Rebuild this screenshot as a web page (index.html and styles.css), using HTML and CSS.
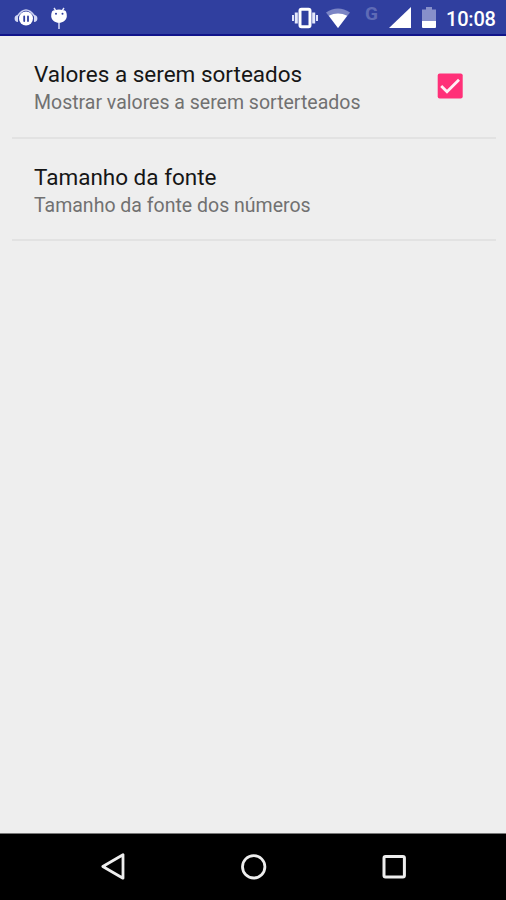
FILE: index.html
```html
<!DOCTYPE html>
<html lang="pt-BR">
<head>
<meta charset="utf-8">
<title>Configurações</title>
<link rel="stylesheet" href="styles.css">
</head>
<body>
<header class="status">
  <div class="notifications">
    <svg width="24" height="20" viewBox="0 0 24 20">
      <path d="M3.500 8Q12-4 20.500 8" fill="none" stroke="#cbd1f2" stroke-width="1.500"/>
      <ellipse cx="12" cy="10.500" rx="7" ry="7" fill="#fff"/>
      <path d="M4 7v7Q.6 13.700.6 10.500T4 7M20 7v7q3.400-.3 3.400-3.500t-3.400-3.500" fill="#d3d8f5"/>
      <path d="M10.200 8.500v4.500M14 8.500v4.500" stroke="#303f9f" stroke-width="1.800" stroke-linecap="round"/>
    </svg>
    <svg class="bug" width="18" height="24" viewBox="0 0 18 24">
      <path d="M4 2l2 3M14 2l-2 3M9 15v8" fill="none" stroke="#e6e9fc" stroke-width="1.400"/>
      <path d="M2 5.500Q3 4 5 4.200Q9 2.700 13 4.200Q15 4 16 5.500Q17 8 16.800 10.500C16.500 14 13 16.800 9 16.800S1.500 14 1.200 10.500Q1 8 2 5.500Z" fill="#fff"/>
      <circle cx="6" cy="7.800" r="1" fill="#303f9f"/><circle cx="12.500" cy="7.800" r="1" fill="#303f9f"/>
    </svg>
  </div>
  <div class="system">
    <svg width="28" height="22" viewBox="0 0 28 22">
      <rect x="9" y="2.200" width="10" height="17.600" rx="1.500" fill="none" stroke="#fff" stroke-width="3"/>
      <path d="M5.300 5.500v11M22.700 5.500v11" stroke="#e4e8fb" stroke-width="3"/>
      <path d="M2 8v6M26 8v6" stroke="#dfe3fa" stroke-width="2"/>
    </svg>
    <svg class="wifi" width="24" height="20" viewBox="0 0 24 20">
      <path d="M12 20L0 4.500Q12-3.500 24 4.500Z" fill="#7b85c5"/>
      <path d="M12 20L2.800 7.800Q12 3.200 21.200 7.800Z" fill="#fff"/>
    </svg>
    <span class="network">G</span>
    <svg class="signal" width="22" height="21" viewBox="0 0 22 21"><path d="M0 21L22 0V21Z" fill="#fff"/></svg>
    <svg class="battery" width="14" height="21" viewBox="0 0 14 21">
      <path d="M0 2.500H4V0H10V2.500H14V14H0Z" fill="#8790ca"/><path d="M0 14H14V20Q14 21 13 21H1Q0 21 0 20Z" fill="#fff"/>
    </svg>
    <time class="clock">10:08</time>
  </div>
</header>
<main class="settings">
  <section class="row">
    <div>
      <h1 class="title">Valores a serem sorteados</h1>
      <p class="summary">Mostrar valores a serem sorterteados</p>
    </div>
    <svg class="check" width="26" height="26" viewBox="0 0 26 26">
      <rect x=".7" y=".5" width="25" height="25" rx="2" fill="#ff3078"/>
      <path d="M4.200 13L10 18.800L22 6.800" fill="none" stroke="#fff0f5" stroke-width="2.800"/>
    </svg>
  </section>
  <section class="row">
    <div>
      <h2 class="title">Tamanho da fonte</h2>
      <p class="summary">Tamanho da fonte dos números</p>
    </div>
  </section>
</main>
<nav class="navbar">
  <svg width="28" height="30" viewBox="0 0 28 30"><path d="M3.800 14.500L24 2.800V26.200Z" fill="none" stroke="#eee" stroke-width="2.800" stroke-linejoin="round"/></svg>
  <svg width="28" height="30" viewBox="0 0 28 30"><circle cx="13.700" cy="14.800" r="11.200" fill="none" stroke="#eee" stroke-width="2.800"/></svg>
  <svg width="28" height="30" viewBox="0 0 28 30"><rect x="4" y="4.500" width="20.400" height="20.400" rx="1.500" fill="none" stroke="#eee" stroke-width="3"/></svg>
</nav>
</body>
</html>
```
FILE: styles.css
```css
* { box-sizing: border-box; }
body {
  margin: 0;
  height: 900px;
  display: flex;
  flex-direction: column;
  background: #eee;
  font-family: Roboto, "Liberation Sans", sans-serif;
  overflow: hidden;
}
svg { display: block; flex: none; }
.status {
  height: 36px;
  display: flex;
  justify-content: space-between;
  padding: 0 11px 0 14px;
  background: #303f9f;
  border-bottom: 2px solid #10148a;
  color: #fff;
}
.notifications, .system { display: flex; align-items: flex-start; }
.notifications svg { margin-top: 8px; }
.notifications .bug { margin: 6px 0 0 12px; }
.system > svg { margin-top: 7px; }
.system .wifi { margin: 8px 0 0 7px; }
.network {
  width: 14px;
  margin: 3px 0 0 15px;
  font-size: 19px;
  line-height: 21px;
  font-weight: 700;
  color: #5f6bb6;
}
.system .signal { margin-left: 10px; }
.system .battery { margin-left: 11px; }
.clock {
  width: 49px;
  margin: 7px 0 0 10px;
  font-size: 20px;
  line-height: 24px;
  font-weight: 500;
  letter-spacing: -.2px;
  white-space: nowrap;
}
.settings { flex: 1; padding: 1px 10px 0 12px; }
.row {
  height: 102px;
  display: flex;
  justify-content: space-between;
  align-items: flex-start;
  padding: 23px 33px 0 22px;
  border-bottom: 2px solid #e2e2e2;
}
.row + .row { padding-top: 24px; }
.title, .summary { margin: 0; font-weight: 400; white-space: nowrap; }
.title { font-size: 22.500px; line-height: 28px; color: #161616; }
.summary { margin-top: 1px; font-size: 19.500px; line-height: 28px; color: #717171; }
.check { margin-top: 13px; }
.navbar {
  height: 67px;
  display: flex;
  justify-content: space-between;
  align-items: center;
  padding: 0 98px 0 99px;
  background: #000;
  border-top: 1px solid #777;
}
```
